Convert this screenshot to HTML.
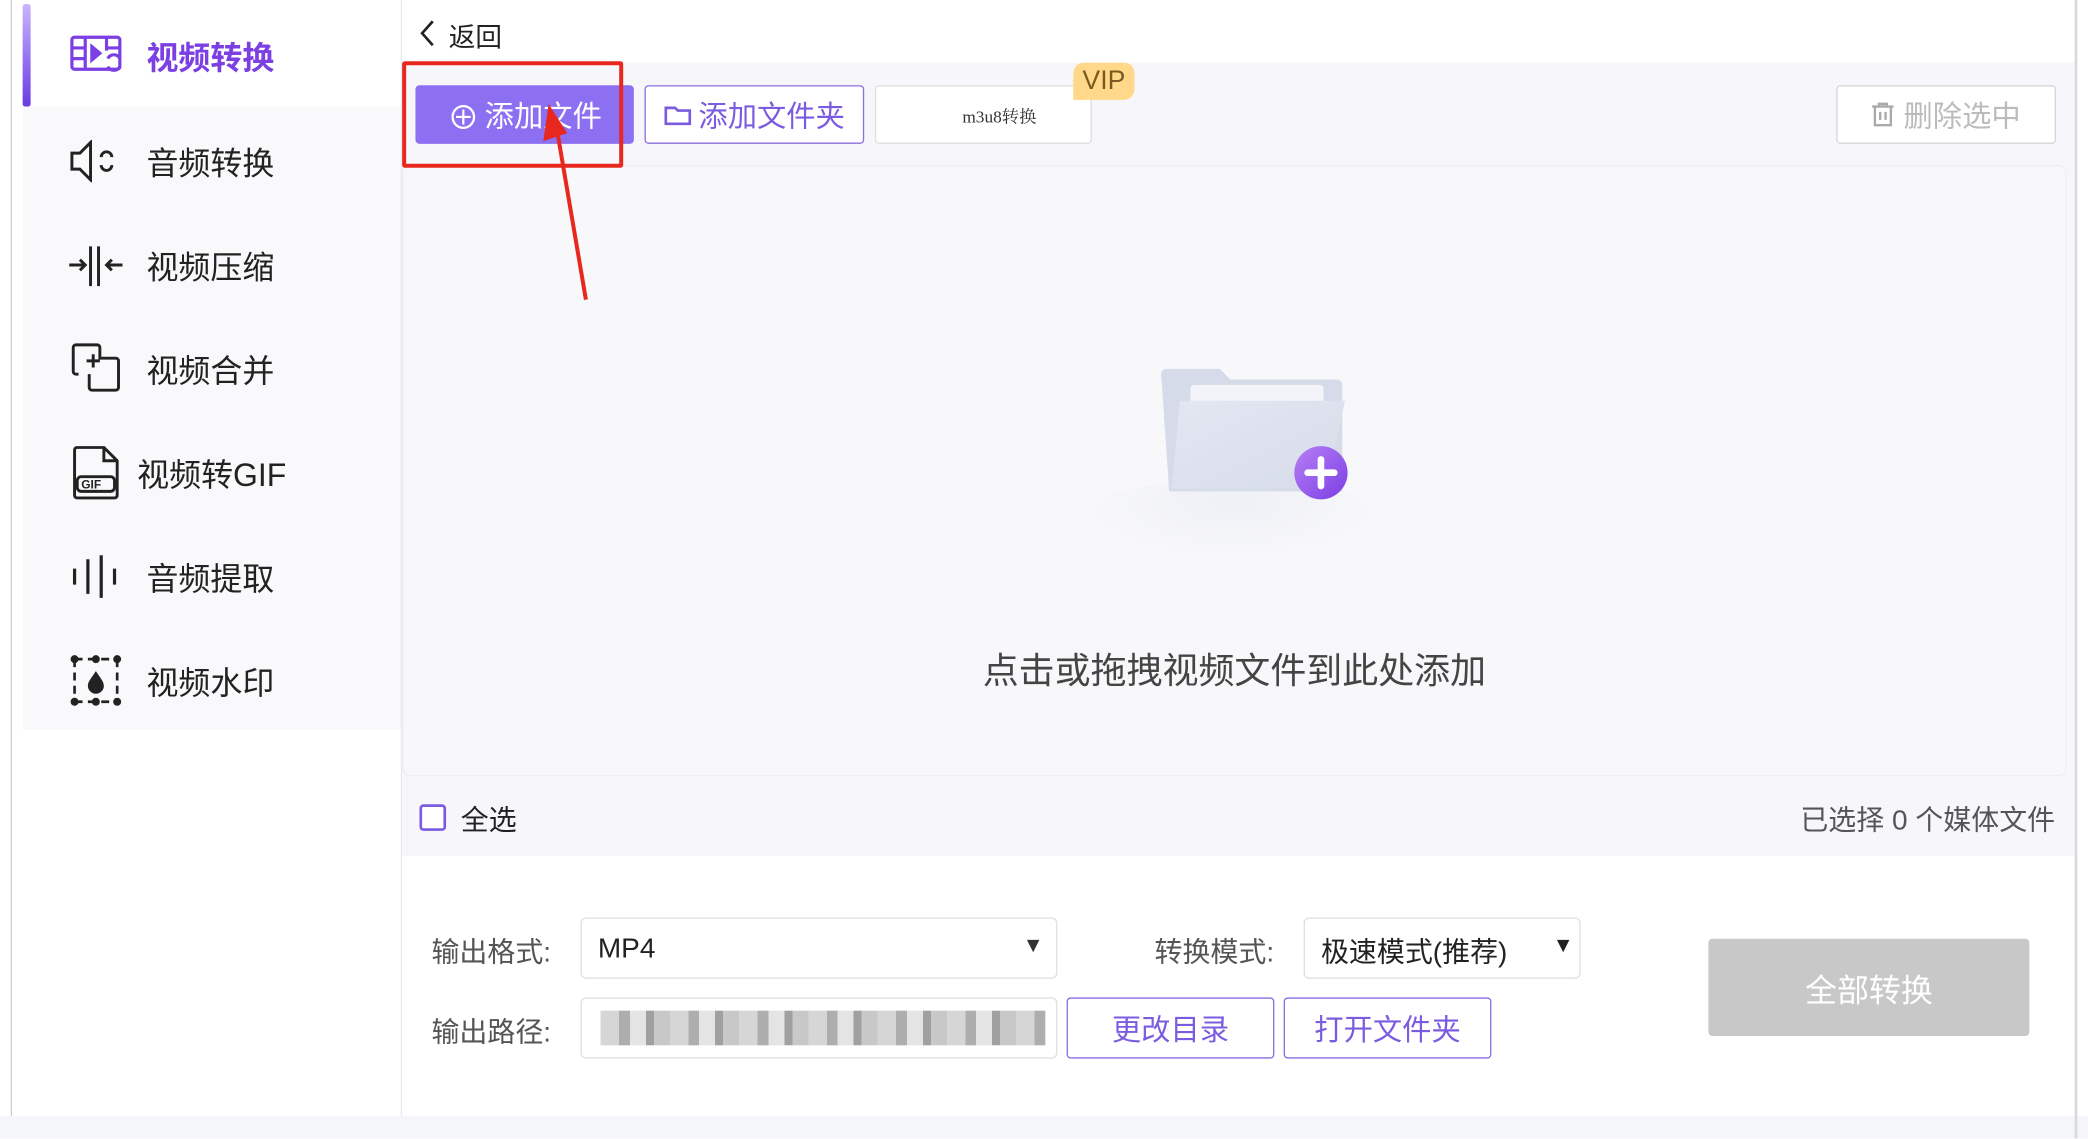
<!DOCTYPE html>
<html><head><meta charset="utf-8"><style>
*{margin:0;padding:0;box-sizing:border-box}
html,body{width:2088px;height:1138px;overflow:hidden;background:#fff}
#w{position:absolute;left:0;top:0;width:1568px;height:855px;transform:scale(1.3316);transform-origin:0 0;font-family:"Liberation Sans","Noto Sans CJK SC",sans-serif;color:#222;background:#fff}
.a{position:absolute}
.t{position:absolute;white-space:nowrap}
.side{font-size:24px;color:#222}
.up{margin-top:-2px}
.btn{position:absolute;border:1px solid #8b6ee0;border-radius:3px;color:#7b5ce0;font-size:22px;display:flex;align-items:center;justify-content:center;background:#fff}
</style></head><body><div id="w">
<div class="a" style="left:8px;top:0;width:1px;height:855px;background:#cfcfcf"></div>
<div class="a" style="left:9px;top:0;width:8px;height:855px;background:#fff"></div>
<div class="a" style="left:17px;top:80px;width:284px;height:468px;background:#f9f9fb"></div>
<div class="a" style="left:17px;top:3px;width:6px;height:77px;background:linear-gradient(#c9b5ff,#6a3be0);border-radius:2px"></div>
<div class="a" style="left:301px;top:0;width:1px;height:838px;background:#e8e8ee"></div>
<div class="a" style="left:0;top:838px;width:1568px;height:17px;background:#f5f6fa"></div>
<svg class="a" style="left:52px;top:26px" width="40" height="30" viewBox="0 0 40 30" fill="none" stroke="#7b3fe4" stroke-width="2.4"><rect x="2" y="2" width="36" height="24" rx="2"/><path d="M2 10h10M2 18h10M12 2v24M28 2v10M28 10h10"/><path d="M17 9l6 5-6 5z" fill="#7b3fe4"/><path d="M29 18a5 5 0 0 1 9 0M38 24a5 5 0 0 1-9 0"/></svg>
<div class="t side up" style="left:110px;top:26px;color:#7b3fe4;font-weight:bold">视频转换</div>
<svg class="a" style="left:52px;top:105px" width="40" height="32" viewBox="0 0 40 32" fill="none" stroke="#222" stroke-width="2.2"><path d="M2 10h6l8-8v28l-8-8H2z"/><path d="M24 13a4 4 0 0 1 8 0M32 19a4 4 0 0 1-8 0"/></svg>
<div class="t side up" style="left:110px;top:105px">音频转换</div>
<svg class="a" style="left:50px;top:183px" width="44" height="32" viewBox="0 0 44 32" fill="none" stroke="#222" stroke-width="2.2"><path d="M2 16h12M10 12l4 4-4 4M18 2v30M24 2v30M30 16h12M34 12l-4 4 4 4"/></svg>
<div class="t side up" style="left:110px;top:183px">视频压缩</div>
<svg class="a" style="left:53px;top:257px" width="38" height="38" viewBox="0 0 38 38" fill="none" stroke="#222" stroke-width="2.2"><path d="M6 24H4a2 2 0 0 1-2-2V4a2 2 0 0 1 2-2h16a2 2 0 0 1 2 2v8h12a2 2 0 0 1 2 2v20a2 2 0 0 1-2 2H16a2 2 0 0 1-2-2v-10"/><path d="M12 14h10M17 9v10"/></svg>
<div class="t side up" style="left:110px;top:261px">视频合并</div>
<svg class="a" style="left:54px;top:335px" width="36" height="40" viewBox="0 0 36 40" fill="none" stroke="#222" stroke-width="2.2"><path d="M2 3a2 2 0 0 1 2-2h20l10 10v26a2 2 0 0 1-2 2H4a2 2 0 0 1-2-2z"/><path d="M24 1v10h10"/><rect x="4" y="23" width="28" height="11" rx="3"/><text x="7" y="32" font-size="9" font-family="Liberation Sans" fill="#222" stroke="none" font-weight="bold">GIF</text></svg>
<div class="t side up" style="left:103px;top:339px">视频转GIF</div>
<svg class="a" style="left:53px;top:415px" width="38" height="36" viewBox="0 0 38 36" fill="none" stroke="#222" stroke-width="2.4"><path d="M3 12v12M13 5v26M23 2v32M33 12v12"/></svg>
<div class="t side up" style="left:110px;top:417px">音频提取</div>
<svg class="a" style="left:52px;top:491px" width="40" height="40" viewBox="0 0 40 40" fill="none" stroke="#222" stroke-width="2"><path d="M4 4h32M4 36h32M4 4v32M36 4v32" stroke-dasharray="6 4"/><circle cx="4" cy="4" r="2" fill="#222"/><circle cx="36" cy="4" r="2" fill="#222"/><circle cx="4" cy="36" r="2" fill="#222"/><circle cx="36" cy="36" r="2" fill="#222"/><circle cx="20" cy="4" r="2" fill="#222"/><circle cx="20" cy="36" r="2" fill="#222"/><path d="M20 13c-4 6-6 8-6 11a6 6 0 0 0 12 0c0-3-2-5-6-11z" fill="#222" stroke="none"/></svg>
<div class="t side up" style="left:110px;top:495px">视频水印</div>
<div class="a" style="left:302px;top:47px;width:1256px;height:596px;background:#f7f7fb"></div>
<div class="a" style="left:302px;top:124px;width:1250px;height:459px;background:#f8f8fb;border:1px solid #eeeef3;border-radius:6px"></div>
<div class="a" style="left:1558px;top:0;width:2px;height:855px;background:#d9d9d9"></div>
<svg class="a" style="left:314px;top:14px" width="14" height="22" viewBox="0 0 14 22" fill="none" stroke="#222" stroke-width="2"><path d="M11 2L3 11l8 9"/></svg>
<div class="t" style="left:337px;top:12px;font-size:20px">返回</div>
<div class="btn" style="left:312px;top:64px;width:164px;height:44px;background:#8d70f2;border-color:#8d70f2;color:#fff"><span style="font-size:24px;margin-right:4px">⊕</span>添加文件</div>
<div class="a" style="left:302px;top:46px;width:166px;height:80px;border:3px solid #e8271f;border-radius:2px"></div>
<div class="btn" style="left:484px;top:64px;width:165px;height:44px"><svg width="22" height="18" viewBox="0 0 22 18" fill="none" stroke="#7b5ce0" stroke-width="2" style="margin-right:4px"><path d="M2 4h7l2 2h9v10H2z"/></svg>添加文件夹</div>
<div class="btn" style="left:657px;top:64px;width:163px;height:44px;border-color:#ddd;color:#333;font-size:13px;font-family:'Liberation Serif','Noto Serif CJK SC',serif;padding-left:24px">m3u8转换</div>
<div class="t" style="left:806px;top:47px;width:46px;height:28px;background:#ffd88a;border-radius:8px 8px 8px 0;color:#7a5a20;font-size:20px;text-align:center;line-height:28px">VIP</div>
<div class="btn" style="left:1379px;top:64px;width:165px;height:44px;border-color:#d6d6d6;color:#bbb"><svg width="18" height="20" viewBox="0 0 18 20" fill="none" stroke="#aaa" stroke-width="1.8" style="margin-right:6px"><path d="M1 4h16M6 4V2h6v2M3 4v14h12V4M7 8v6M11 8v6"/></svg>删除选中</div>
<svg class="a" style="left:400px;top:70px" width="50" height="160" viewBox="0 0 50 160"><path d="M40 155L17 20" stroke="#e8271f" stroke-width="3"/><path d="M12 8l-4 28 18-6z" fill="#e8271f"/></svg>
<div class="a" style="left:810px;top:360px;width:230px;height:60px;border-radius:50%;background:radial-gradient(ellipse at 50% 30%,#eef0f6,rgba(248,248,251,0) 70%)"></div>
<svg class="a" style="left:868px;top:275px" width="150" height="105" viewBox="0 0 150 105"><defs><linearGradient id="g" x1="0" y1="0" x2="1" y2="1"><stop offset="0" stop-color="#e3e7f2"/><stop offset="1" stop-color="#d7dcea"/></linearGradient><linearGradient id="p" x1="0" y1="0" x2="1" y2="1"><stop offset="0" stop-color="#b77ef5"/><stop offset="1" stop-color="#7b3fe4"/></linearGradient></defs><path d="M4 6a4 4 0 0 1 4-4h40l8 8h80a4 4 0 0 1 4 4v80H10z" fill="#d6dbe9"/><rect x="26" y="14" width="100" height="20" rx="3" fill="#f2f4f9"/><path d="M18 26h124l-14 66H12z" fill="url(#g)"/><circle cx="124" cy="80" r="20" fill="url(#p)"/><path d="M124 70v20M114 80h20" stroke="#fff" stroke-width="5" stroke-linecap="round"/></svg>
<div class="t" style="left:738px;top:482px;font-size:27px;color:#444">点击或拖拽视频文件到此处添加</div>
<div class="a" style="left:315px;top:604px;width:20px;height:20px;border:2px solid #7b5ce0;border-radius:3px;background:#fff"></div>
<div class="t up" style="left:346px;top:602px;font-size:21px">全选</div>
<div class="t up" style="left:1352px;top:602px;font-size:21px;color:#555">已选择 0 个媒体文件</div>
<div class="t up" style="left:324px;top:701px;font-size:21px;color:#555">输出格式:</div>
<div class="a" style="left:436px;top:689px;width:358px;height:46px;border:1px solid #e0e0e0;border-radius:4px;font-size:21px;padding:11px 12px">MP4</div>
<div class="t" style="left:768px;top:702px;font-size:16px;color:#333">▼</div>
<div class="t up" style="left:867px;top:701px;font-size:21px;color:#555">转换模式:</div>
<div class="a" style="left:979px;top:689px;width:208px;height:46px;border:1px solid #e0e0e0;border-radius:4px;font-size:21px;padding:9px 12px">极速模式(推荐)</div>
<div class="t" style="left:1166px;top:702px;font-size:16px;color:#222">▼</div>
<div class="t up" style="left:324px;top:761px;font-size:21px;color:#555">输出路径:</div>
<div class="a" style="left:436px;top:749px;width:358px;height:46px;border:1px solid #e0e0e0;border-radius:4px;overflow:hidden;background:#fff">
<div class="a" style="left:14px;top:9px;width:334px;height:26px;background:repeating-linear-gradient(90deg,#ccc 0 14px,#999 14px 22px,#ddd 22px 34px,#888 34px 40px,#bbb 40px 52px);opacity:.8"></div></div>
<div class="btn" style="left:801px;top:749px;width:156px;height:46px">更改目录</div>
<div class="btn" style="left:964px;top:749px;width:156px;height:46px">打开文件夹</div>
<div class="a" style="left:1283px;top:705px;width:241px;height:73px;background:#c8c8c8;border-radius:3px;color:#fff;font-size:24px;display:flex;align-items:center;justify-content:center">全部转换</div>
</div></body></html>
